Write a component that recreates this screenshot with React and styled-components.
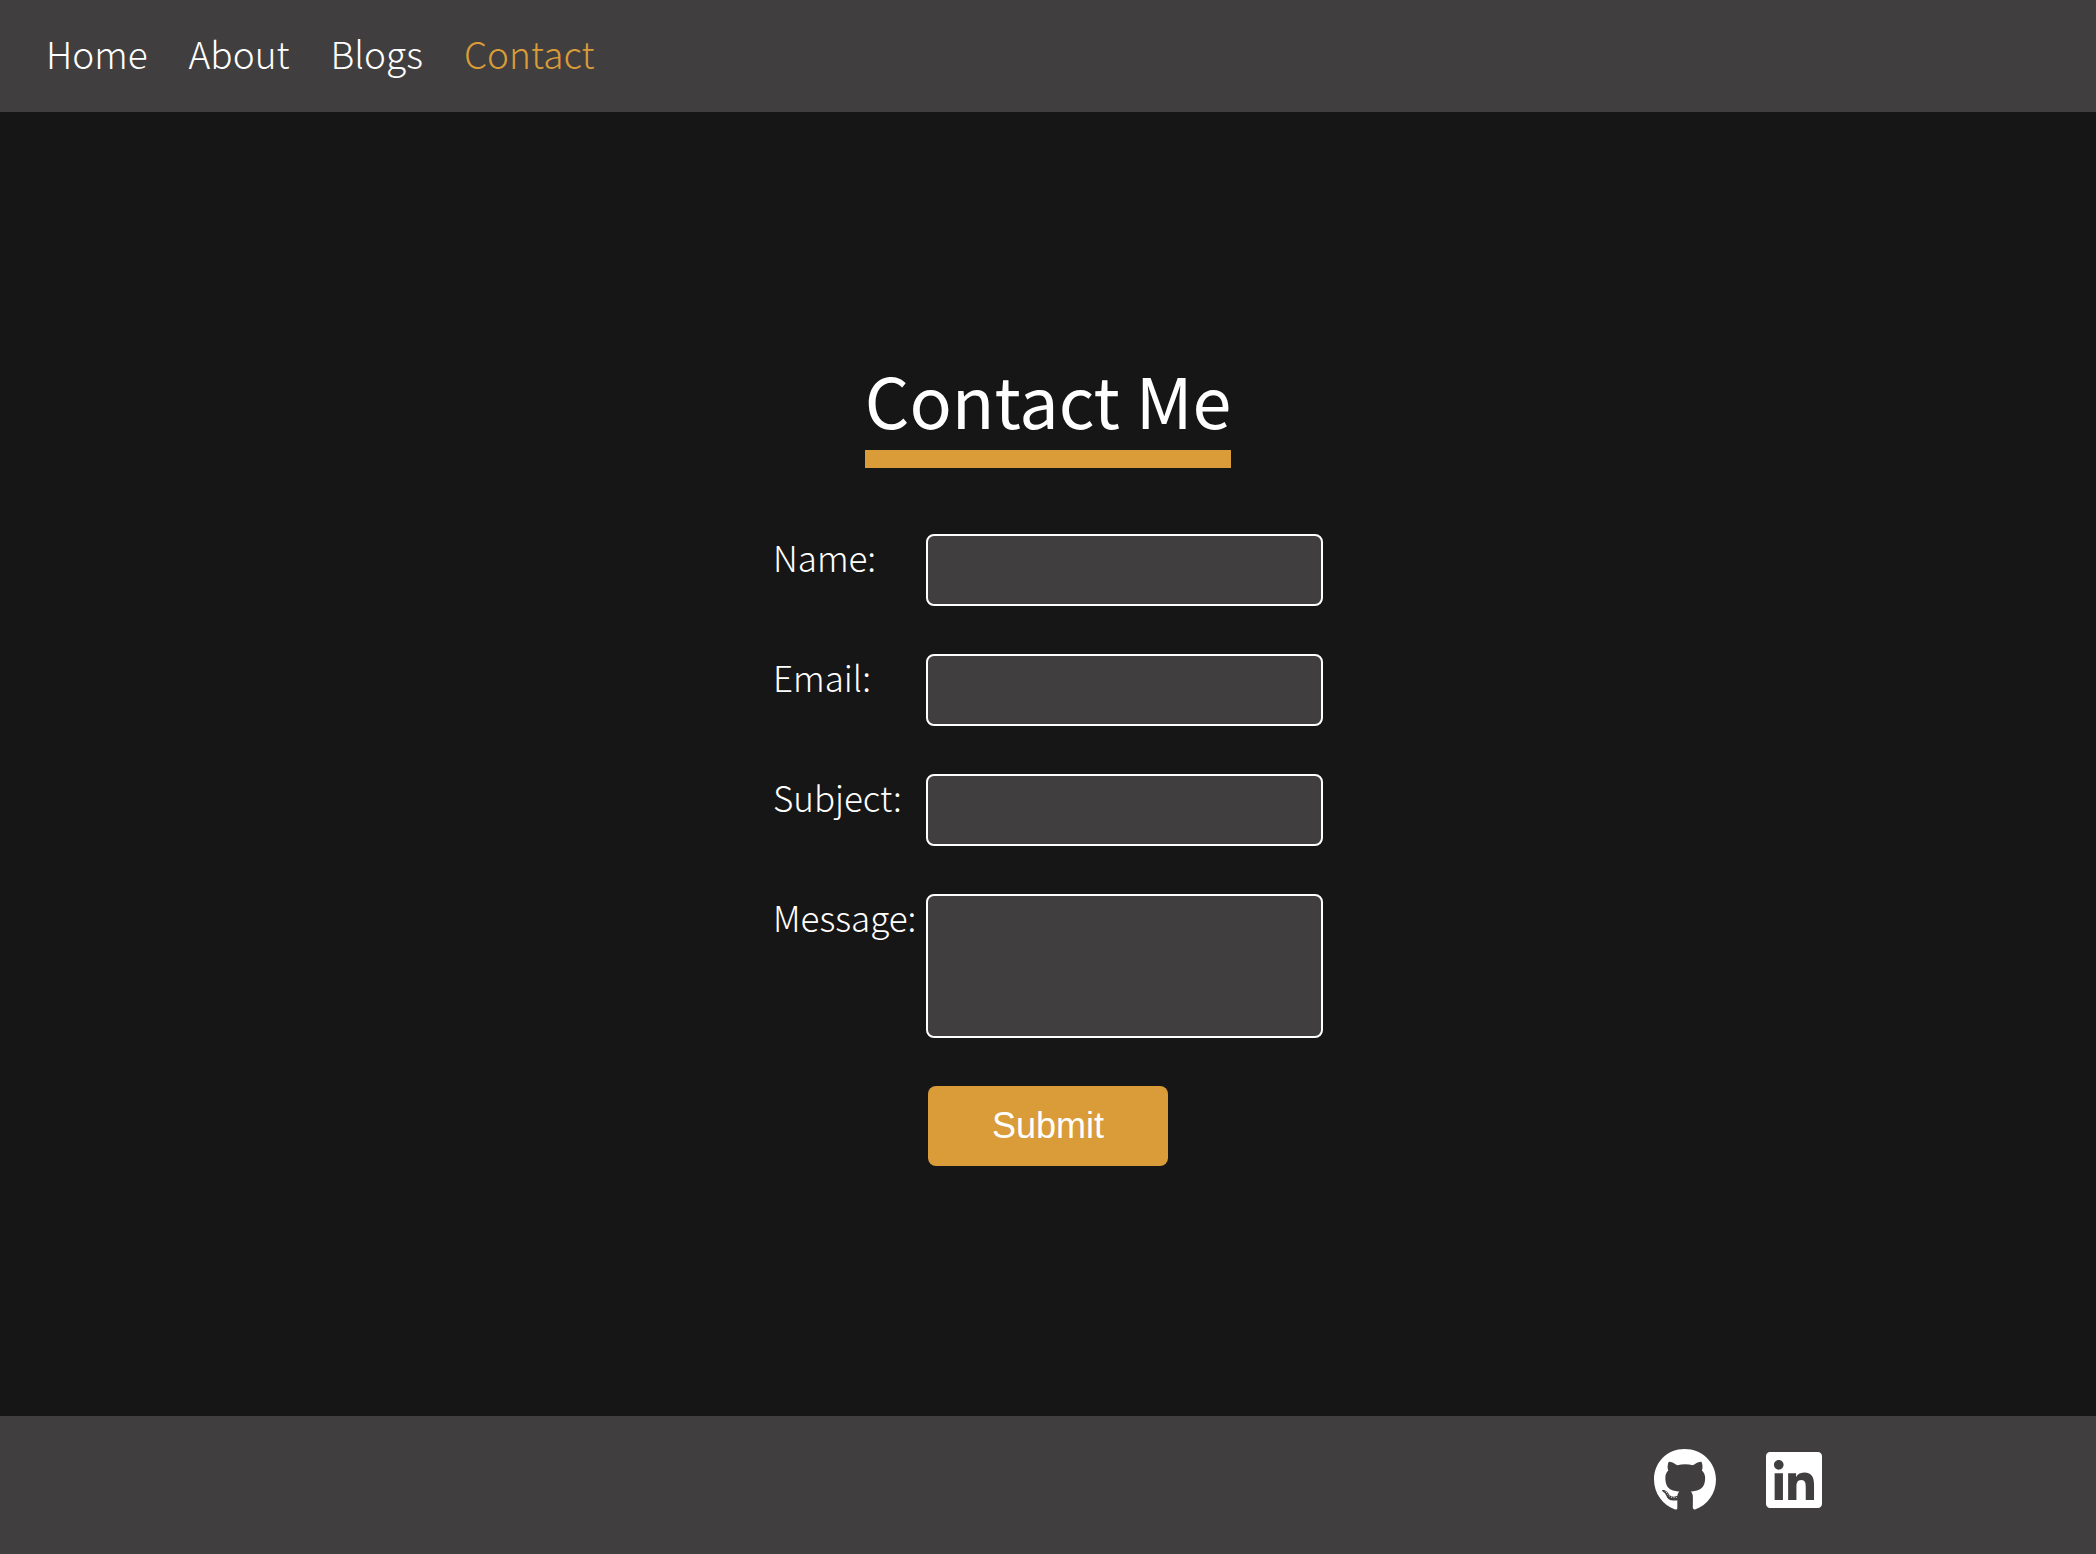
import React from 'react';
import styled, { createGlobalStyle } from 'styled-components';
import { FaGithub, FaLinkedin } from 'react-icons/fa';

const GlobalStyle = createGlobalStyle`
  *, *::before, *::after { box-sizing: border-box; }
  body {
    margin: 0;
    background: #161616;
    color: #fff;
    font-family: "Noto Sans CJK SC", "Noto Sans", sans-serif;
    font-weight: 300;
  }
`;

const Page = styled.div`
  display: flex;
  flex-direction: column;
  min-height: 100vh;
`;

const Header = styled.header`
  background: #413e3f;
  padding: 28px 46px 34px;
`;

const Nav = styled.nav`
  display: flex;
  gap: 41px;
`;

const NavLink = styled.a`
  color: ${({ $active }) => ($active ? '#d99c38' : '#fff')};
  font-size: 37px;
  line-height: 50px;
  text-decoration: none;
`;

const Main = styled.main`
  flex: 1;
  display: flex;
  flex-direction: column;
  align-items: center;
  justify-content: center;
`;

const Title = styled.h1`
  margin: 0 0 66px;
  padding-bottom: 14px;
  border-bottom: 18px solid #d99c38;
  font-size: 70px;
  font-weight: 400;
  line-height: 74px;
`;

const Form = styled.form`
  display: flex;
  flex-direction: column;
  align-items: center;
  gap: 48px;
`;

const Row = styled.div`
  display: grid;
  grid-template-columns: 153px 397px;
  align-items: start;
`;

const Label = styled.label`
  font-size: 35px;
  line-height: 46px;
`;

const Input = styled.input`
  width: 100%;
  height: 72px;
  padding: 8px 16px;
  border: 2px solid #fff;
  border-radius: 8px;
  background: #413e3f;
  color: #fff;
  font: inherit;
  font-size: 35px;
`;

const TextArea = styled(Input).attrs({ as: 'textarea' })`
  display: block;
  height: 144px;
  resize: none;
`;

const Submit = styled.button`
  width: 240px;
  height: 80px;
  border: 0;
  border-radius: 8px;
  background: #d99c38;
  color: #fff;
  font-family: "Liberation Sans", Arial, sans-serif;
  font-size: 36px;
  cursor: pointer;
`;

const Footer = styled.footer`
  display: flex;
  justify-content: flex-end;
  gap: 45px;
  padding: 32px 270px 42px;
  background: #413e3f;
`;

const SocialLink = styled.a`
  display: flex;
  color: #fff;

  svg {
    width: auto;
    height: 64px;
  }
`;

const links = ['Home', 'About', 'Blogs', 'Contact'];

const fields = [
  { id: 'name', label: 'Name:', type: 'text' },
  { id: 'email', label: 'Email:', type: 'email' },
  { id: 'subject', label: 'Subject:', type: 'text' },
];

export default function App() {
  return (
    <Page>
      <GlobalStyle />
      <Header>
        <Nav>
          {links.map((name) => (
            <NavLink key={name} href={`#${name.toLowerCase()}`} $active={name === 'Contact'}>
              {name}
            </NavLink>
          ))}
        </Nav>
      </Header>
      <Main>
        <Title>Contact Me</Title>
        <Form onSubmit={(event) => event.preventDefault()}>
          {fields.map(({ id, label, type }) => (
            <Row key={id}>
              <Label htmlFor={id}>{label}</Label>
              <Input id={id} name={id} type={type} />
            </Row>
          ))}
          <Row>
            <Label htmlFor="message">Message:</Label>
            <TextArea id="message" name="message" />
          </Row>
          <Submit type="submit">Submit</Submit>
        </Form>
      </Main>
      <Footer>
        <SocialLink href="#github" aria-label="GitHub">
          <FaGithub />
        </SocialLink>
        <SocialLink href="#linkedin" aria-label="LinkedIn">
          <FaLinkedin />
        </SocialLink>
      </Footer>
    </Page>
  );
}
